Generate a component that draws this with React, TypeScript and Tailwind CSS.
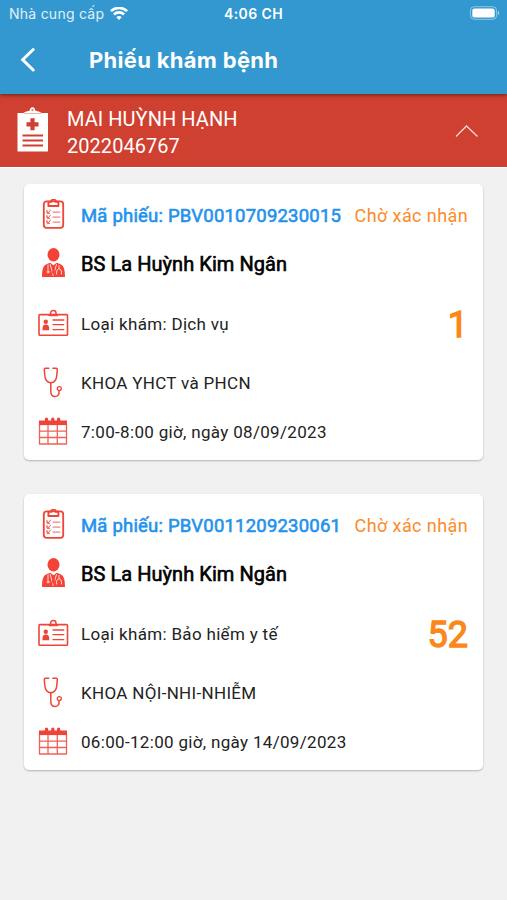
import type { ReactNode } from 'react';

interface Ticket {
  code: string;
  status: string;
  doctor: string;
  type: string;
  department: string;
  time: string;
  order: number;
}

const tickets: Ticket[] = [
  {
    code: 'PBV0010709230015',
    status: 'Chờ xác nhận',
    doctor: 'BS La Huỳnh Kim Ngân',
    type: 'Dịch vụ',
    department: 'KHOA YHCT và PHCN',
    time: '7:00-8:00 giờ, ngày 08/09/2023',
    order: 1,
  },
  {
    code: 'PBV0011209230061',
    status: 'Chờ xác nhận',
    doctor: 'BS La Huỳnh Kim Ngân',
    type: 'Bảo hiểm y tế',
    department: 'KHOA NỘI-NHI-NHIỄM',
    time: '06:00-12:00 giờ, ngày 14/09/2023',
    order: 52,
  },
];

function Icon({ children }: { children: ReactNode }) {
  return (
    <svg
      width="32"
      height="32"
      viewBox="0 0 32 32"
      fill="none"
      stroke="#f04438"
      strokeLinecap="round"
      strokeLinejoin="round"
      className="shrink-0"
    >
      {children}
    </svg>
  );
}

function ClipboardIcon() {
  return (
    <Icon>
      <rect x="6.8" y="2.4" width="19.4" height="26.4" rx="2.8" strokeWidth="1.8" />
      <path d="M11.4 3v4h10V3M12 2.8h2.3a2.2 2.2 0 0 1 4.4 0H21" strokeWidth="1.9" />
      <path d="M16 13.1h7M16 18.1h7M16 23.1h7" strokeWidth="1.1" strokeOpacity="0.65" />
      <path
        d="M10 12.5l1.3 1.3 2.2-2.8M10 17.5l1.3 1.3 2.2-2.8M10 22.5l1.3 1.3 2.2-2.8M10 11.5v2.8h2.6M10 16.5v2.8h2.6M10 21.5v2.8h2.6"
        strokeWidth="0.9"
      />
    </Icon>
  );
}

function DoctorIcon() {
  return (
    <Icon>
      <ellipse cx="16.5" cy="6.7" rx="6" ry="6.7" fill="#f44336" stroke="none" />
      <path
        d="M10 16.1l3.2-1.3 3.3 2.5 3.3-2.5 3.2 1.3c3.9 1.5 5 5.4 5 12.9H5c0-7.5 1.100-11.400 5-12.900z"
        fill="#f44336"
        stroke="none"
      />
      <path d="M11 17v5.500M13.200 16.500l3 11 3.300-11M22 17.500v2.800M19.600 26v-1.800c0-4.500 4.800-4.500 4.800 0V26" stroke="#fff" strokeWidth="0.8" />
      <path d="M14.800 17.300h3.400l-.9 2.400.7 4.500-1.500 3-1.500-3 .8-4.500z" fill="#f44336" stroke="none" />
      <circle cx="11" cy="24" r="1" stroke="#fff" strokeWidth="0.7" />
    </Icon>
  );
}

function CardIcon() {
  return (
    <Icon>
      <rect x="2" y="6.6" width="28.5" height="20.6" rx="0.8" strokeWidth="1.6" />
      <path d="M13.6 6.300V5.100a2.700 2.700 0 0 1 5.400 0v1.200M12.200 7.500h8.200" strokeWidth="1.500" />
      <circle cx="8.800" cy="13.700" r="2.200" fill="#f04438" stroke="none" />
      <path d="M5.500 22.300v-2.200c0-2.700 1.400-3.700 3.300-3.700s3.400 1 3.400 3.700v2.200z" fill="#f04438" stroke="none" />
      <path d="M16 12h10.800M16 16.600h10.800M16 21.600h10.800" strokeWidth="1.300" />
    </Icon>
  );
}

function StethoscopeIcon() {
  return (
    <Icon>
      <path
        d="M11.700 1.300H8.400c-.8 0-1.200.5-1.100 1.300l.5 5.900c.4 4.400 2.700 7.200 6 7.200s5.600-2.800 6-7.200l.5-5.900c.1-.8-.3-1.300-1.100-1.300h-3.300"
        strokeWidth="1.500"
      />
      <path d="M13.800 15.900v8.400c0 3.300 1.600 5.300 4.200 5.300 2.800 0 4.400-2.200 4-5.300" strokeWidth="1.500" />
      <circle cx="22.300" cy="21.600" r="2" strokeWidth="1.300" />
    </Icon>
  );
}

function CalendarIcon() {
  return (
    <Icon>
      <path d="M2 4.500h28v4.600H2z" fill="#f04438" stroke="none" />
      <path d="M9.500 3.200v2.300M15.800 3.200v2.300M21.600 3.200v2.300" strokeWidth="3.300" />
      <path d="M2.500 8v20h27V8M11 9v19M20.300 9v19M2.500 15.200h27M2.500 21.500h27" strokeWidth="1.300" strokeOpacity="0.85" />
    </Icon>
  );
}

function StatusBar() {
  return (
    <div className="grid h-7 grid-cols-3 items-center pl-[9px] pr-[7px] text-white">
      <div className="flex items-center gap-1.5 whitespace-nowrap text-[14px] tracking-[0.25px] text-white/85">
        <span className="-mt-px">Nhà cung cấp</span>
        <svg width="18" height="14" viewBox="0 0 18 14" fill="none" stroke="#fff" strokeWidth="2.6">
          <path d="M.9 4.100c4.500-4.300 11.700-4.300 16.200 0M3.900 7.500c2.900-2.800 7.300-2.800 10.200 0" />
          <path d="M9 13l-2.700-2.800c1.500-1.500 3.900-1.500 5.400 0z" fill="#fff" stroke="none" />
        </svg>
      </div>
      <div className="-mt-px whitespace-nowrap pr-0.5 text-center text-[14px] font-semibold tracking-[0.4px]">4:06 CH</div>
      <svg width="31" height="14" viewBox="0 0 31 14" className="-mt-0.5 justify-self-end">
        <rect x="1.4" y="0.7" width="26.2" height="12.6" rx="3.8" fill="none" stroke="#fff" strokeOpacity="0.45" />
        <rect x="3.3" y="2.4" width="22.4" height="9.2" rx="2.2" fill="#fff" />
        <path d="M28.8 4.7c2 .9 2 3.7 0 4.6z" fill="#fff" fillOpacity="0.5" />
      </svg>
    </div>
  );
}

function TicketCard({ ticket }: { ticket: Ticket }) {
  return (
    <div className="h-[276px] rounded-[5px] bg-white pl-[13px] pr-[15px] pt-[7px] text-[17px] tracking-[0.32px] text-[#222] shadow-[0_1px_2px_rgba(0,0,0,0.25)]">
      <div className="flex h-12 items-center whitespace-nowrap">
        <ClipboardIcon />
        <span className="ml-3 pt-[3px] text-[18.5px] tracking-[0.2px] text-[#2492ec] [-webkit-text-stroke:0.6px_#2492ec]">
          Mã phiếu: {ticket.code}
        </span>
        <span className="ml-auto text-[18px] tracking-[0.4px] text-[#fb8c2a]">{ticket.status}</span>
      </div>
      <div className="flex h-[50px] items-center gap-3">
        <DoctorIcon />
        <span className="text-[20px] tracking-[0.05px] text-black [-webkit-text-stroke:0.6px_#000]">{ticket.doctor}</span>
      </div>
      <div className="flex h-[70px] items-center gap-3">
        <CardIcon />
        <span className="pt-px">Loại khám: {ticket.type}</span>
        <span className="ml-auto pt-px text-[36px] tracking-normal text-[#fb8718] [-webkit-text-stroke:1.3px_#fb8718]">
          {ticket.order}
        </span>
      </div>
      <div className="flex h-12 items-center gap-3">
        <StethoscopeIcon />
        <span className="pt-0.5">{ticket.department}</span>
      </div>
      <div className="flex h-[50px] items-center gap-3">
        <CalendarIcon />
        <span className="pt-0.5">{ticket.time}</span>
      </div>
    </div>
  );
}

export default function App() {
  return (
    <div className="flex min-h-screen flex-col bg-[#f1f1f1] font-['Roboto',sans-serif]">
      <header className="relative z-10 h-[94px] bg-[#3298cf] font-['Inter',sans-serif] shadow-[0_1px_4px_rgba(0,0,0,0.5)]">
        <StatusBar />
        <div className="flex h-16 items-center pl-5 text-white">
          <svg width="16" height="26" viewBox="0 0 16 26" fill="none" stroke="#fff" strokeWidth="3" strokeLinecap="round">
            <path d="M13.2 2.5L2.7 12.700l10.500 10.300" />
          </svg>
          <h1 className="ml-[53px] text-[22px] font-bold tracking-[0.3px]">Phiếu khám bệnh</h1>
        </div>
      </header>

      <section className="flex h-[74px] items-center border-b border-white bg-[#cf4030] pl-4 pr-7 text-white">
        <svg width="33" height="46" viewBox="0 0 33 46" fill="#fff" className="-mt-0.5">
          <path d="M1.500 6h6c.8-1 2-1.500 4-1.800l2.200-.6C14 1.500 15 .3 16.500.3s2.500 1.200 2.800 3.300l2.200.6c2 .3 3.200.8 4 1.800H32v38.500H1.500z" />
          <path d="M8 6.500h17" stroke="#cf4030" strokeOpacity="0.4" />
          <circle cx="16.500" cy="3" r="1.200" fill="#cf4030" fillOpacity="0.6" />
          <path d="M16.500 11.300v12M10.500 17.300h12" stroke="#cf4030" strokeWidth="4.200" />
          <path d="M6.500 28.500h20.500M6.500 33.500h20.500M6.500 38.500h20.500" stroke="#cf4030" strokeWidth="2.100" />
        </svg>
        <div className="ml-[18px] pt-1 text-[20px] leading-[27px] tracking-[0.05px]">
          <div>MAI HUỲNH HẠNH</div>
          <div>2022046767</div>
        </div>
        <svg width="24" height="14" viewBox="0 0 24 14" fill="none" stroke="#fff" strokeOpacity="0.8" strokeWidth="1.3" className="ml-auto">
          <path d="M1 12.500L11.500 2 22.500 12.500" />
        </svg>
      </section>

      <main className="flex flex-col gap-[34px] px-6 pt-4">
        {tickets.map((ticket) => (
          <TicketCard key={ticket.code} ticket={ticket} />
        ))}
      </main>
    </div>
  );
}
